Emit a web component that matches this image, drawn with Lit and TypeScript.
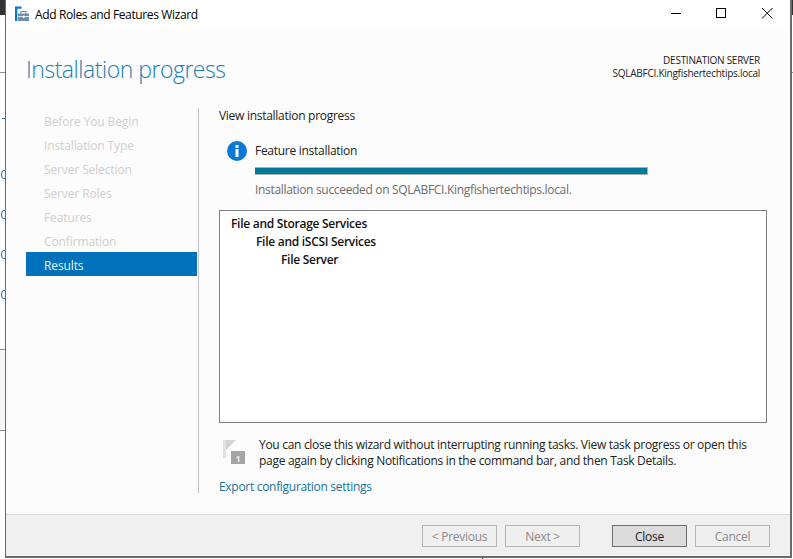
import { LitElement, html, css } from "lit";
import { customElement } from "lit/decorators.js";

const STEPS = ["Before You Begin", "Installation Type", "Server Selection", "Server Roles", "Features", "Confirmation"];
const ARCS = [170, 210, 250, 290];

@customElement("app-root")
export class AppRoot extends LitElement {
  static styles = css`
    :host { display: block; width: 793px; height: 559px; overflow: hidden; position: relative; background: #fff; font-family: "Open Sans", "Noto Sans", sans-serif; font-size: 12px; letter-spacing: -0.28px; color: #1a1a1a; }
    .bg { position: absolute; inset: 0; }
    .bg i { position: absolute; display: block; background: #8a8a8a; }
    .bg .dark { background: #333; }
    .bg .pale { background: #f6f6f6; }
    .bg .arc { left: 1px; width: 7px; height: 9px; box-sizing: border-box; background: none; border: 1px solid #2a7ab8; border-radius: 50%; }
    .win { position: absolute; left: 5px; top: 0; width: 787px; height: 558px; box-sizing: border-box; border-left: 1px solid #6a6a6a; border-right: 2px solid #6a6a6a; border-bottom: 2px solid #6a6a6a; background: #fcfcfc; display: flex; flex-direction: column; }
    .title { height: 28px; flex: none; background: #fff; display: flex; align-items: center; padding-left: 9px; gap: 6px; color: #000; letter-spacing: -0.37px; }
    .title > svg { flex: none; }
    .controls { margin-left: auto; margin-top: -2px; display: flex; }
    .controls svg { display: block; width: 46px; height: 26px; }
    .head { height: 80px; flex: none; display: flex; justify-content: space-between; padding: 0 30px 0 20px; }
    .head h1 { margin: 24px 0 0; font-weight: 300; font-size: 23px; letter-spacing: -0.48px; line-height: 34px; color: #1b7fb0; }
    .dest { margin-top: 26px; text-align: right; font-size: 10px; line-height: 13px; letter-spacing: -0.26px; color: #222; }
    .body { flex: 1; display: flex; min-height: 0; padding-left: 20px; }
    .nav { width: 171px; flex: none; }
    .nav div { height: 24px; line-height: 28px; padding-left: 18px; color: #cfcfcf; letter-spacing: -0.12px; }
    .nav div.on { background: #0072bc; color: #e8f2f9; }
    .main { flex: 1; margin-left: 1px; border-left: 1px solid #c4c4c4; padding: 0 23px 0 20px; height: 385px; display: flex; flex-direction: column; }
    .main > * { flex: none; }
    .lead { line-height: 16px; color: #222; }
    .feat { display: flex; align-items: center; gap: 8px; margin: 17px 0 0 8px; height: 20px; color: #222; }
    .feat span { margin-top: -2px; }
    .bar { height: 6px; width: 392px; margin: 6px 0 0 36px; background: #007a96; border: 1px solid #b0b0b0; border-left: 0; }
    .ok { margin: 7px 0 0 36px; line-height: 16px; color: #6d6d6d; letter-spacing: -0.32px; }
    .box { margin-top: 12px; height: 213px; box-sizing: border-box; border: 1px solid #808080; background: #fff; padding: 4px 11px; font-weight: 600; line-height: 18px; color: #111; }
    .box div:nth-child(2) { padding-left: 25px; }
    .box div:nth-child(3) { padding-left: 50px; }
    .note { display: flex; gap: 14px; margin: 14px 0 0 4px; line-height: 16px; color: #222; letter-spacing: -0.3px; }
    .note svg { flex: none; margin-top: 3px; }
    .link { margin-top: 10px; line-height: 16px; color: #1a7199; letter-spacing: -0.3px; }
    .foot { height: 42px; flex: none; box-sizing: border-box; background: #f0f0f0; border-top: 1px solid #dadada; display: flex; align-items: flex-start; justify-content: flex-end; padding: 10px 20px 0 0; }
    .btn { width: 75px; height: 22px; box-sizing: border-box; border: 1px solid #b5b5b5; color: #8a8a8a; display: flex; align-items: center; justify-content: center; background: #efefef; margin-left: 8px; }
    .btn.def { background: #dcdcdc; border-color: #6f6f6f; color: #1a1a1a; margin-left: 32px; }
  `;
  render() {
    return html`
      <div class="bg">
        <i class="dark" style="left:0;top:0;width:5px;height:15px"></i>
        <i style="left:0;top:72px;width:5px;height:1px"></i>
        <i class="pale" style="left:0;top:349px;width:5px;height:81px"></i>
        <i style="left:0;top:349px;width:5px;height:1px"></i>
        <i style="left:0;top:430px;width:5px;height:1px"></i>
        <i class="dark" style="left:790px;top:0;width:3px;height:15px"></i>
        <i style="left:792px;top:72px;width:1px;height:1px"></i>
        <i class="dark" style="left:482px;top:558px;width:1px;height:1px"></i>
        ${ARCS.map((y) => html`<i class="arc" style="top:${y}px"></i>`)}
        <i style="left:2px;top:118px;width:3px;height:1px;background:#2a7ab8"></i>
      </div>
      <div class="win">
        <div class="title">
          <svg width="14" height="16" viewBox="0 0 14 16"><path d="M0 .5h6.500v2.200H2.300V15H0z" fill="#0a78d0"/><path d="M3 7.500h11V15H3z" fill="#6d8ea6"/><path d="M6 7.500V5.500h5v2" fill="none" stroke="#6d8ea6" stroke-width="1.200"/><path d="M3 10.500h11" stroke="#dfe7ec"/><rect x="8" y="9.500" width="1.500" height="2.500" fill="#fff"/></svg>
          <span>Add Roles and Features Wizard</span>
          <div class="controls">
            <svg viewBox="0 0 46 26"><path d="M19 13.500h10" stroke="#000" fill="none"/></svg>
            <svg viewBox="0 0 46 26"><rect x="18.500" y="8.500" width="9" height="9" stroke="#000" fill="none"/></svg>
            <svg viewBox="0 0 46 26"><path d="M18 8l10.500 10.500M28.500 8L18 18.500" stroke="#000" fill="none"/></svg>
          </div>
        </div>
        <div class="head">
          <h1>Installation progress</h1>
          <div class="dest">DESTINATION SERVER<br />SQLABFCI.Kingfishertechtips.local</div>
        </div>
        <div class="body">
          <div class="nav">${STEPS.map((s) => html`<div>${s}</div>`)}<div class="on">Results</div></div>
          <div class="main">
            <div class="lead">View installation progress</div>
            <div class="feat">
              <svg width="20" height="20" viewBox="0 0 20 20"><circle cx="10" cy="10" r="10" fill="#0a78d4"/><rect x="8.500" y="8" width="3" height="8" fill="#fff"/><rect x="8.500" y="4" width="3" height="3" fill="#fff"/></svg>
              <span>Feature installation</span>
            </div>
            <div class="bar"></div>
            <div class="ok">Installation succeeded on SQLABFCI.Kingfishertechtips.local.</div>
            <div class="box"><div>File and Storage Services</div><div>File and iSCSI Services</div><div>File Server</div></div>
            <div class="note">
              <svg width="22" height="24" viewBox="0 0 22 24"><path d="M0 0h3v18H0z" fill="#e2e2e2"/><path d="M3 0h10L3 10z" fill="#d4d4d4"/><rect x="8" y="11" width="14" height="13" fill="#a5a5a5"/><text x="15" y="21.500" text-anchor="middle" font-size="9" font-weight="700" fill="#eee" font-family="Open Sans">1</text></svg>
              <div>You can close this wizard without interrupting running tasks. View task progress or open this<br />page again by clicking Notifications in the command bar, and then Task Details.</div>
            </div>
            <div class="link">Export configuration settings</div>
          </div>
        </div>
        <div class="foot">
          <div class="btn">&lt; Previous</div><div class="btn">Next &gt;</div><div class="btn def">Close</div><div class="btn">Cancel</div>
        </div>
      </div>`;
  }
}
